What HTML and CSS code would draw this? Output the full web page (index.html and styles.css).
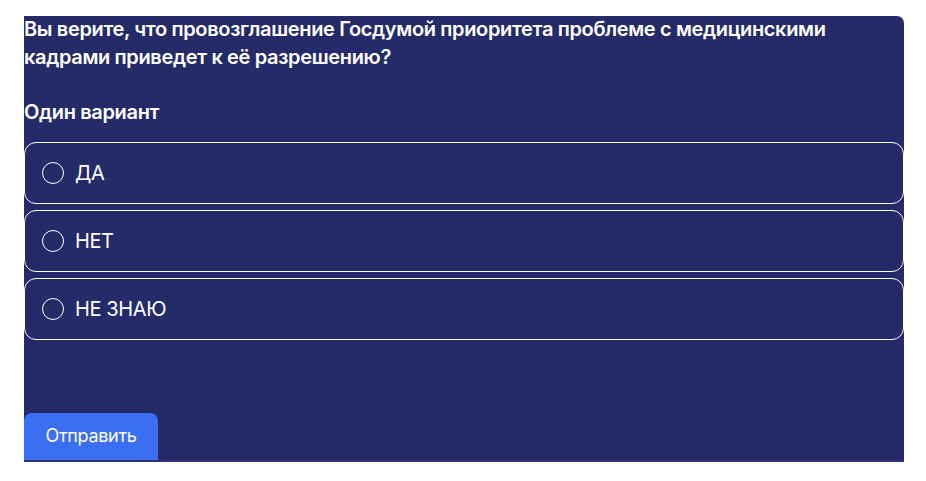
FILE: index.html
```html
<!DOCTYPE html>
<html lang="ru">
<head>
<meta charset="utf-8">
<link rel="stylesheet" href="styles.css">
</head>
<body>
<div class="panel">
  <div class="question">Вы верите, что провозглашение Госдумой приоритета проблеме с медицинскими кадрами приведет к её разрешению?</div>
  <div class="hint">Один вариант</div>
  <div class="options">
    <label class="option"><span class="radio"></span><span class="label">ДА</span></label>
    <label class="option"><span class="radio"></span><span class="label">НЕТ</span></label>
    <label class="option"><span class="radio"></span><span class="label">НЕ ЗНАЮ</span></label>
  </div>
  <div class="actions">
    <button class="submit">Отправить</button>
  </div>
</div>
</body>
</html>
```
FILE: styles.css
```css
html, body {
  margin: 0;
  padding: 0;
  background: #ffffff;
}
body {
  padding: 16px 22px 0 24px;
  font-family: Inter, "Noto Sans", sans-serif;
  color: #ffffff;
}
.panel {
  background: #252b69;
  width: 880px;
  height: 446px;
  border-top-right-radius: 7px;
  display: flex;
  flex-direction: column;
  box-sizing: border-box;
  border-bottom: 2px solid #2d3372;
}
.question {
  font-weight: 600;
  font-size: 20px;
  line-height: 28px;
  margin-top: -1px;
  letter-spacing: -0.35px;
  padding-right: 40px;
}
.hint {
  font-weight: 600;
  font-size: 20px;
  line-height: 28px;
  margin-top: 27px;
  letter-spacing: -0.35px;
}
.options {
  display: flex;
  flex-direction: column;
  gap: 6px;
  margin-top: 16px;
}
.option {
  display: flex;
  align-items: center;
  height: 62px;
  box-sizing: border-box;
  border: 1px solid #ffffff;
  border-radius: 12px;
  padding-left: 17px;
}
.radio {
  width: 20px;
  height: 20px;
  border: 1px solid #ffffff;
  border-radius: 50%;
  flex: none;
}
.label {
  margin-left: 11px;
  font-size: 20px;
  letter-spacing: -0.4px;
}
.actions {
  margin-top: auto;
}
.submit {
  display: block;
  width: 134px;
  height: 47px;
  background: #3b6ef0;
  color: #ffffff;
  border: none;
  border-radius: 8px 8px 0 0;
  font-family: Inter, "Noto Sans", sans-serif;
  font-size: 18px;
  padding: 0 0 2px 0;
  letter-spacing: -0.3px;
}
```
